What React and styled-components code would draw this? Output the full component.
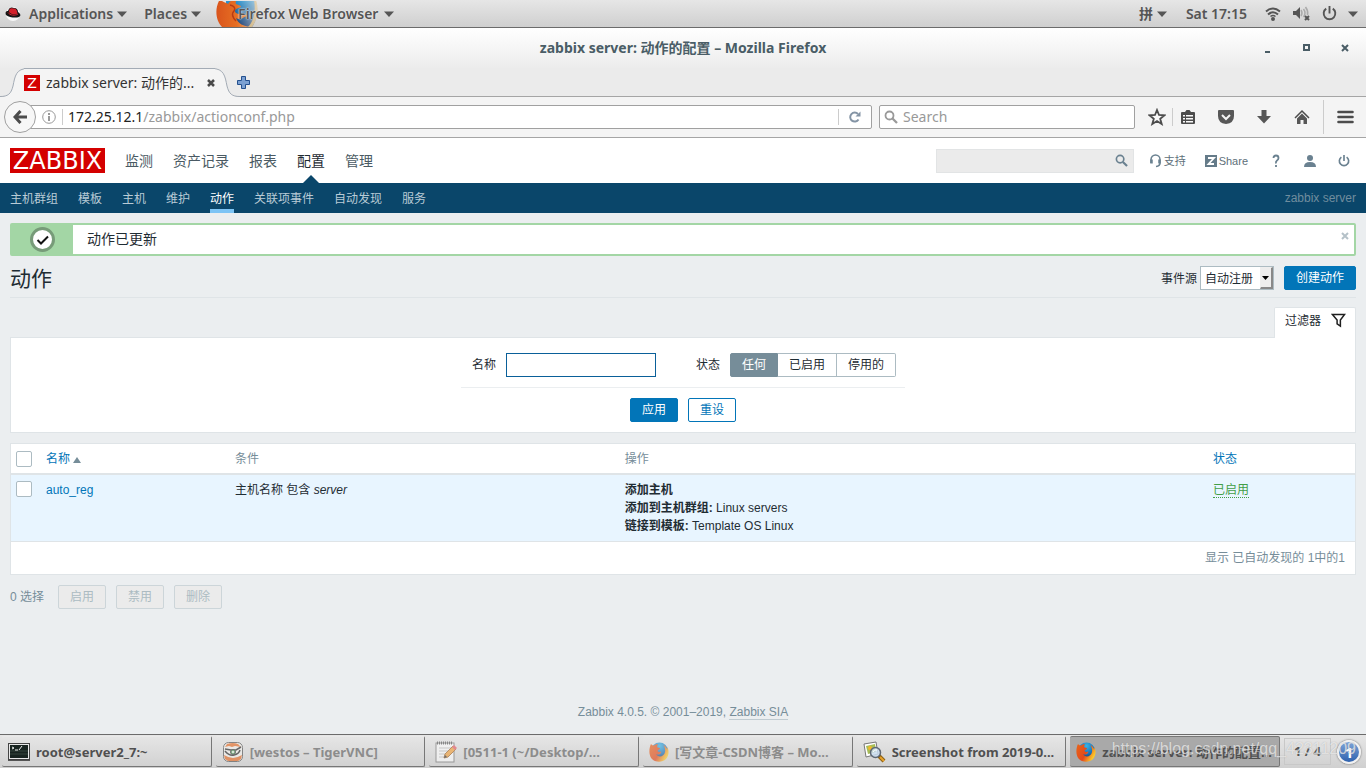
import React, { useState } from 'react'
import styled, { createGlobalStyle, css } from 'styled-components'

const UI_FONT = "'Noto Sans', 'Noto Sans CJK SC', sans-serif"
const PAGE_FONT = "'Liberation Sans', 'Noto Sans CJK SC', sans-serif"

const GlobalStyle = createGlobalStyle`
  * {
    box-sizing: border-box;
  }
  body {
    margin: 0;
    background: #ebeef0;
    color: #1f2c33;
    font-family: ${PAGE_FONT};
    font-size: 12px;
    line-height: 18px;
  }
  button, input, select {
    font: inherit;
    margin: 0;
  }
  button {
    cursor: pointer;
  }
  a {
    text-decoration: none;
  }
`

const Screen = styled.div`
  min-height: 100vh;
  display: flex;
  flex-direction: column;
`

/* ---------- desktop top bar ---------- */

const TopBar = styled.header`
  height: 28px;
  display: flex;
  align-items: center;
  justify-content: space-between;
  padding: 0 8px 0 5px;
  border-bottom: 1px solid #6b6b6b;
  background: linear-gradient(#e6e6e6, #cfcfcf);
  font-family: ${UI_FONT};
  font-size: 14px;
  font-weight: 600;
  color: #555;
`

const TopGroup = styled.div`
  display: flex;
  align-items: center;
  height: 27px;
`

const TopButton = styled.button`
  display: flex;
  align-items: center;
  gap: 4px;
  height: 27px;
  padding: 0;
  margin-left: ${p => p.$space || 0}px;
  border: 0;
  background: none;
  color: inherit;
  white-space: nowrap;
`

const AppLabel = styled.span`
  margin-left: -24px;
  padding-right: 2px;
  text-shadow: 0 0 2px #eee, 0 0 1px #eee;
`

/* ---------- browser chrome ---------- */

const TitleBar = styled.div`
  height: 40px;
  display: grid;
  grid-template-columns: 1fr auto 1fr;
  align-items: center;
  padding: 0 14px;
  background: linear-gradient(#fff, #ececec);
  font-family: ${UI_FONT};
  font-size: 14px;
  font-weight: 700;
  color: #4a5d66;
`

const WindowButtons = styled.div`
  display: flex;
  justify-content: flex-end;
  gap: 25px;
`

const IconButton = styled.button`
  display: flex;
  align-items: center;
  justify-content: center;
  padding: 0;
  border: 0;
  background: none;
  color: #4c4c4c;
  svg {
    flex: none;
  }
`

const TabStrip = styled.div`
  height: 29px;
  display: flex;
  background: #ebebeb;
  box-shadow: inset 0 -1px #a5a5a5;
`

const TabEdge = styled.svg`
  width: 28px;
  height: 29px;
  flex: none;
  transform: ${p => (p.$flip ? 'scaleX(-1)' : 'none')};
`

const Tab = styled.div`
  display: flex;
  align-items: center;
  width: 191px;
  margin: 0 -3px 0 -4px;
  border-top: 1px solid #a3abb5;
  background: #f4f4f4;
  font-family: ${UI_FONT};
  font-size: 14px;
  color: #333;
  z-index: 1;
`

const Favicon = styled.span`
  width: 16px;
  height: 16px;
  margin-right: 6px;
  background: #d40000;
  color: #fff;
  font: 14px/16px 'DejaVu Sans', sans-serif;
  text-align: center;
`

const TabTitle = styled.span`
  flex: 1;
  white-space: nowrap;
`

const NewTab = styled(IconButton)`
  margin-left: -3px;
`

const ToolBar = styled.div`
  height: 41px;
  display: flex;
  align-items: center;
  padding: 0 12px 0 4px;
  border-bottom: 1px solid #a5a5a5;
  background: #f4f4f4;
  font-family: ${UI_FONT};
  font-size: 14px;
`

const BackButton = styled(IconButton)`
  width: 32px;
  height: 32px;
  flex: none;
  border: 1px solid #a0a0a0;
  border-radius: 50%;
  background: #f7f7f7;
  z-index: 1;
`

const Address = styled.div`
  flex: 1;
  height: 24px;
  display: flex;
  align-items: center;
  margin-left: -6px;
  padding: 0 10px 0 11px;
  border: 1px solid #a0a0a0;
  border-radius: 0 2px 2px 0;
  background: #fff;
  color: #999;
  b {
    font-weight: 400;
    color: #222;
  }
`

const Separator = styled.span`
  width: 1px;
  height: ${p => p.$tall || 16}px;
  margin: 0 ${p => p.$right || 5}px 0 ${p => p.$left || 6}px;
  background: #ccc;
`

const Url = styled.span`
  flex: 1;
`

const WebSearch = styled.label`
  width: 256px;
  height: 24px;
  display: flex;
  align-items: center;
  gap: 5px;
  margin: 0 13px 0 7px;
  padding: 0 4px;
  border: 1px solid #a0a0a0;
  border-radius: 2px;
  background: #fff;
  input {
    flex: 1;
    min-width: 0;
    padding: 0;
    border: 0;
    background: none;
    outline: 0;
  }
  input::placeholder {
    color: #999;
  }
`

const ToolIcons = styled.div`
  display: flex;
  gap: 22px;
`

/* ---------- zabbix ---------- */

const Page = styled.div`
  flex: 1;
  display: flex;
  flex-direction: column;
`

const PageHeader = styled.header`
  height: 45px;
  display: flex;
  align-items: center;
  padding: 0 16px 0 10px;
  background: #fff;
`

const Logo = styled.a`
  width: 95px;
  height: 25px;
  margin-right: 20px;
  background: #d40000;
  color: #fff;
  font: 24px/27px 'DejaVu Sans', sans-serif;
  text-align: center;
`

const MainNav = styled.nav`
  flex: 1;
  display: flex;
  gap: 20px;
  font-size: 14px;
`

const MainLink = styled.a`
  position: relative;
  height: 45px;
  line-height: 47px;
  color: ${p => (p.$active ? '#1f2c33' : '#4a5a63')};
  ${p =>
    p.$active &&
    css`
      &::after {
        content: '';
        position: absolute;
        left: 6px;
        bottom: 0;
        border: 8px solid transparent;
        border-top: 0;
        border-bottom-color: #0a466a;
      }
    `}
`

const HeaderSearch = styled.form`
  width: 198px;
  height: 24px;
  display: flex;
  align-items: center;
  margin-right: 15px;
  padding-right: 5px;
  border: 1px solid #e2e4e5;
  background: #ebebeb;
  input {
    flex: 1;
    min-width: 0;
    border: 0;
    background: none;
    outline: 0;
  }
`

const HeaderLinks = styled.div`
  display: flex;
  align-items: center;
  gap: 19px;
  font-size: 11px;
  a {
    display: flex;
    align-items: center;
    gap: 2px;
    color: #5e6f79;
  }
`

const HeaderIcons = styled.div`
  display: flex;
  align-items: center;
  gap: 22px;
  margin-left: 3px;
`

const SubNav = styled.nav`
  height: 30px;
  display: flex;
  gap: 20px;
  padding: 0 10px;
  background: #0a466a;
  line-height: 31px;
`

const SubLink = styled.a`
  height: 30px;
  line-height: 32px;
  color: ${p => (p.$active ? '#fff' : '#b9cbd6')};
  box-shadow: ${p => (p.$active ? 'inset 0 -4px #7dc4f5' : 'none')};
`

const ServerName = styled.span`
  margin-left: auto;
  color: #708d9e;
`

const Content = styled.main`
  flex: 1;
  padding: 10px 10px 0;
`

const Message = styled.output`
  height: 33px;
  display: flex;
  border: 2px solid #a3d6a5;
  border-radius: 2px;
  background: #fff;
  font-size: 14px;
  line-height: 28px;
`

const MessageIcon = styled.span`
  width: 61px;
  display: flex;
  align-items: center;
  justify-content: center;
  padding-right: 1px;
  background: #a3d6a5;
`

const MessageText = styled.span`
  flex: 1;
  padding-left: 14px;
`

const CloseMessage = styled(IconButton)`
  align-self: flex-start;
  padding: 7px 5px;
`

const TitleRow = styled.div`
  height: 32px;
  display: flex;
  align-items: flex-start;
  margin: 10px 0 9px;
  border-bottom: 1px solid #dfe4e7;
  h1 {
    flex: 1;
    margin: 0;
    font-size: 21px;
    line-height: 26px;
    font-weight: 400;
  }
`

const SourceField = styled.div`
  display: flex;
  align-items: center;
  gap: 3px;
  margin-right: 10px;
  line-height: 26px;
`

const SelectBox = styled.span`
  position: relative;
  display: flex;
  align-self: flex-start;
  select {
    width: 74px;
    height: 24px;
    padding: 1px 4px 0;
    appearance: none;
    border: 1px solid #acbbc2;
    border-radius: 0;
    background: #fff;
    color: inherit;
    line-height: 18px;
  }
`

const SelectArrow = styled.span`
  position: absolute;
  top: 1px;
  right: 1px;
  width: 13px;
  height: 22px;
  display: flex;
  align-items: center;
  justify-content: center;
  border: solid;
  border-width: 1px 2px 2px 1px;
  border-color: #eee #888 #888 #eee;
  background: #ededed;
  pointer-events: none;
`

const Button = styled.button`
  height: 24px;
  padding: 1px 11px 0;
  border: 1px solid #0275b8;
  border-radius: 2px;
  background: ${p => (p.$alt ? '#fff' : '#0275b8')};
  color: ${p => (p.$alt ? '#0275b8' : '#fff')};
  line-height: 21px;
  &:disabled {
    border-color: #ccd5d9;
    background: #ebebeb;
    color: #acbbc2;
  }
`

const FilterTab = styled.button`
  height: 31px;
  display: flex;
  align-items: center;
  gap: 10px;
  margin: 0 0 -1px auto;
  padding: 0 9px 5px 10px;
  border: 1px solid #dfe4e7;
  border-bottom: 0;
  border-radius: 2px 2px 0 0;
  background: #fff;
  color: inherit;
  position: relative;
`

const Filter = styled.form`
  display: flex;
  flex-direction: column;
  align-items: center;
  margin-bottom: 10px;
  padding: 15px 0 10px;
  border: 1px solid #dfe4e7;
  background: #fff;
`

const FilterFields = styled.div`
  display: flex;
  align-items: center;
  gap: 10px;
  margin-bottom: 10px;
  padding: 0 9px 10px 11px;
  border-bottom: 1px solid #ebeef0;
  line-height: 20px;
`

const NameInput = styled.input`
  width: 150px;
  height: 24px;
  padding: 0 5px;
  border: 1px solid #0a6099;
  outline: 0;
`

const StatusLabel = styled.span`
  margin-left: 30px;
`

const Segments = styled.div`
  display: flex;
  label {
    position: relative;
  }
  input {
    position: absolute;
    opacity: 0;
  }
  span {
    display: block;
    height: 24px;
    padding: 0 11px;
    border: 1px solid #acbbc2;
    border-left-width: 0;
    line-height: 23px;
  }
  label:first-child span {
    border-left-width: 1px;
    border-radius: 2px 0 0 2px;
  }
  label:last-child span {
    border-radius: 0 2px 2px 0;
  }
  input:checked + span {
    border-color: #768d99;
    background: #768d99;
    color: #fff;
  }
`

const ButtonRow = styled.div`
  display: flex;
  align-items: center;
  gap: 10px;
`

const Table = styled.table`
  width: 100%;
  table-layout: fixed;
  border-collapse: separate;
  border-spacing: 0;
  border: 1px solid #dfe4e7;
  background: #fff;
  th {
    height: 31px;
    padding: 0 5px;
    border-bottom: 2px solid #dfe4e7;
    color: #768d99;
    font-weight: 400;
    text-align: left;
  }
  td {
    padding: 6px 5px;
    vertical-align: top;
  }
  tbody td {
    border-bottom: 1px solid #dfe4e7;
    background: #e8f5ff;
  }
  tfoot td {
    padding: 7px 10px;
    color: #768d99;
    text-align: right;
  }
  a {
    color: #0275b8;
  }
`

const Col = styled.col`
  width: ${p => p.$width};
`

const Check = styled.input`
  && {
    display: block;
    width: 16px;
    height: 16px;
    appearance: none;
    border: 1px solid #acbbc2;
    border-radius: 2px;
    background: #fff;
  }
`

const SortMark = styled.span`
  display: inline-block;
  margin-left: 3px;
  border: 4px solid transparent;
  border-top: 0;
  border-bottom: 6px solid #768d99;
`

const StatusLink = styled.a`
  && {
    color: #429e47;
    border-bottom: 1px dotted #429e47;
  }
`

const Actions = styled.div`
  display: flex;
  align-items: center;
  gap: 10px;
  margin-top: 10px;
  color: #768d99;
  span {
    margin-right: 4px;
  }
`

const Footer = styled.footer`
  padding-bottom: 13px;
  color: #768d99;
  text-align: center;
  a {
    border-bottom: 1px solid #c0cbd1;
    color: inherit;
  }
`

/* ---------- task bar ---------- */

const TaskBar = styled.footer`
  position: relative;
  height: 34px;
  display: flex;
  align-items: center;
  gap: 4px;
  padding: 0 5px 0 2px;
  border-top: 1px solid #6b6b6b;
  background: linear-gradient(#e6e6e6, #d0d0d0);
  font-family: ${UI_FONT};
  font-size: 13px;
  font-weight: 700;
  color: #555;
`

const Task = styled.button`
  flex: 1;
  min-width: 0;
  height: 31px;
  display: flex;
  align-items: center;
  gap: 6px;
  padding: 1px 6px 0;
  border: solid;
  border-width: 1px 1px 1px 0;
  border-color: ${p => (p.$active ? '#777' : '#e9e9e9 #777 #777')};
  border-radius: 2px;
  background: ${p => (p.$active ? '#a9a9a9' : 'linear-gradient(#e5e5e5, #d2d2d2)')};
  color: ${p => (p.$dim ? '#8c8c8c' : '#505050')};
  text-align: left;
  svg {
    flex: none;
    opacity: ${p => (p.$dim ? 0.65 : 1)};
  }
  span {
    overflow: hidden;
    white-space: nowrap;
  }
`

const Pager = styled.span`
  width: 47px;
  height: 27px;
  border: 1px solid #c8c8c8;
  line-height: 25px;
  text-align: center;
`

const Notice = styled.span`
  width: 24px;
  height: 24px;
  margin-left: 2px;
  border: 2px solid #f2f2f2;
  border-radius: 50%;
  background: linear-gradient(#7ea5da, #2f62ae);
  box-shadow: 0 0 2px #555;
  color: #fff;
  font-size: 15px;
  line-height: 20px;
  text-align: center;
`

const BlogMark = styled.span`
  position: absolute;
  top: 4px;
  right: 10px;
  color: rgba(255, 255, 255, 0.65);
  font: 16px/20px ${PAGE_FONT};
  text-shadow: 0 0 1px rgba(120, 120, 120, 0.5);
  pointer-events: none;
`

/* ---------- drawings ---------- */

const Caret = () => (
  <svg width='10' height='6'>
    <path d='M0 0.500h10L5 6z' fill='#555' />
  </svg>
)

const RedHat = () => (
  <svg width='16' height='16' viewBox='0 0 16 16'>
    <circle cx='8' cy='8' r='7' fill='#f7f7f7' />
    <path d='M1 9C0 6 1 5 3 5C4 1 7 1 9 2C12 2 13 4 13 6C16 8 16 10 14 11C11 12 5 12 1 9z' fill='#161616' />
    <path d='M4 6C4 2 6 2 8 2.500C11 2 12 4 12.500 7.500C10 9 6 8.500 4 6z' fill='#d3202a' />
    <path d='M3 6.500C5 9.500 10 10 13 8' fill='none' stroke='#d3202a' strokeWidth='1' />
  </svg>
)

const FirefoxIcon = ({ size = 20, id = 'fx' }) => (
  <svg width={size} height={size} viewBox='0 0 20 20'>
    <defs>
      <radialGradient id={`${id}-globe`} cx='0.5' cy='0.2' r='0.8'>
        <stop offset='0' stopColor='#36b5e8' />
        <stop offset='0.6' stopColor='#1b6fb5' />
        <stop offset='1' stopColor='#132f62' />
      </radialGradient>
      <linearGradient id={`${id}-fox`} x1='0' y1='0' x2='1' y2='0.5'>
        <stop offset='0' stopColor='#e8651a' />
        <stop offset='0.6' stopColor='#e4491b' />
        <stop offset='1' stopColor='#fbc92b' />
      </linearGradient>
    </defs>
    <circle cx='10.500' cy='9' r='8.500' fill={`url(#${id}-globe)`} />
    <path
      d='M2 2C3 3.500 4 3.500 5 3.500C7 2 8 2 9 2.500C8 3.500 8 4.500 8.500 5.500L11 6C11 7.500 9 7.500 8.500 9C9.500 10.500 11 10 12.500 9.500C11.500 13 8.500 13 7 12C9 16 15 15 16 10C16.500 7 15.500 5 14.500 3C18 5 18 7 18 8L18.500 5C20.500 10 19.500 14 17 17C13 21 6 20.500 2.500 16.500C-0.500 12.500 0 6 2 2z'
      fill={`url(#${id}-fox)`}
    />
  </svg>
)

/* the panel shows only the middle of a large icon, faded on its right side */
const PanelFirefox = () => (
  <svg width='42' height='26' viewBox='0 0 42 26'>
    <defs>
      <linearGradient id='panel-fade'>
        <stop offset='0.5' stopColor='#fff' />
        <stop offset='1' stopColor='#fff' stopOpacity='0.3' />
      </linearGradient>
      <mask id='panel-mask'>
        <rect width='42' height='26' fill='url(#panel-fade)' />
      </mask>
      <linearGradient id='panel-globe' x1='0' y1='0' x2='0' y2='1'>
        <stop offset='0' stopColor='#2f9bd6' />
        <stop offset='1' stopColor='#17386f' />
      </linearGradient>
      <linearGradient id='panel-fox'>
        <stop offset='0' stopColor='#d9541c' />
        <stop offset='1' stopColor='#f08128' />
      </linearGradient>
    </defs>
    <g mask='url(#panel-mask)'>
      <path d='M10 -2H39C43 8 41 19 36 26H10z' fill='url(#panel-globe)' />
      <path
        d='M4 -2C-2 8 0 20 6 26H34C28 25 22 23 20 17C25 20 27 16 31 15C29 12 25 12 22 13C19 12 18 10 20 8L25 6C25 4 21 4 20 3C19 1 20 0 22 -2C17 -2 14 0 12 3C9 1 6 1 4 -2z'
        fill='url(#panel-fox)'
      />
      <path d='M14 4C18 5 20 7 18 10C15 13 17 17 20 20' fill='none' stroke='#b83c14' strokeWidth='1.500' />
      <path d='M38 -1C40 10 38 20 32 26H36C42 18 43 8 40 -1z' fill='#dcae58' />
    </g>
  </svg>
)

const Wifi = () => (
  <svg width='16' height='14' viewBox='0 0 16 14' fill='none' stroke='#555' strokeWidth='2'>
    <path d='M1 4.500Q8 -1.500 15 4.500' />
    <path d='M3 7.500Q8 3 13 7.500' />
    <path d='M5.500 9.500Q8 7.500 10.500 9.500' strokeWidth='1.500' />
    <circle cx='8' cy='12' r='1' fill='#555' />
  </svg>
)

const Muted = () => (
  <svg width='17' height='15' viewBox='0 0 17 15' fill='none'>
    <path d='M0 5h3l4-4v12L3 9H0z' fill='#555' />
    <path d='M8 4q2 3 0 6M10.500 3q3 4 0 8M12.500 1q3 4 2 8' stroke='#aaa' strokeWidth='1.500' />
    <path d='M12 10l4 4m0-4l-4 4' stroke='#555' strokeWidth='2' />
  </svg>
)

const Power = ({ size = 16, color = '#555', width = 2 }) => (
  <svg width={size} height={size} viewBox='0 0 16 16' fill='none' stroke={color} strokeWidth={width}>
    <path d='M4.500 2.800A6.200 6.200 0 1 0 11.500 2.800M8 0v8' />
  </svg>
)

const Magnifier = ({ size = 14, color = '#999' }) => (
  <svg width={size} height={size} viewBox='0 0 14 14' fill='none' stroke={color}>
    <circle cx='5.500' cy='5.500' r='4' strokeWidth='1.800' />
    <path d='M8.500 8.500l4.500 4.500' strokeWidth='2.300' />
  </svg>
)

const Cross = ({ size = 8, color = '#4a4a4a', width = 2.5 }) => (
  <svg width={size} height={size} viewBox='0 0 8 8' stroke={color} strokeWidth={width}>
    <path d='M1 1l6 6M7 1L1 7' />
  </svg>
)

const Edge = ({ flip }) => (
  <TabEdge $flip={flip} viewBox='0 0 28 29'>
    <path d='M0 28.500C8 28.500 11 26 13 18C15 8 16 0.500 28 0.500V29H0z' fill='#f4f4f4' />
    <path d='M0 28.500C8 28.500 11 26 13 18C15 8 16 0.500 28 0.500' fill='none' stroke='#a3abb5' />
  </TabEdge>
)

const TerminalIcon = () => (
  <svg width='22' height='20' viewBox='0 0 22 20'>
    <rect x='0.500' y='1.500' width='21' height='16' fill='#e8e8e8' stroke='#444' />
    <rect x='2' y='3' width='18' height='13' fill='#182420' />
    <path d='M2 9h18M2 12h18' stroke='#35453d' />
    <path d='M4 5l2 1-2 1M7 8h3M11 8l3-4' stroke='#eee' fill='none' />
    <path d='M0 18.500h22' stroke='#555' />
  </svg>
)

const TigerIcon = () => (
  <svg width='22' height='20' viewBox='-1 0 22 20'>
    <rect x='0.500' y='0.500' width='19' height='19' rx='5' fill='#f2f0ec' stroke='#555' />
    <path d='M4 2q6-2 11 0l3 3-6-1-3 1-3-1-4 1z' fill='#e56d28' />
    <path d='M1 13q5 3 9 3t9-3l-1 4-3 2H5l-3-2z' fill='#e56d28' />
    <path d='M2 7l6 1h5l5-3M2 9q4 5 9 4t6-5' fill='none' stroke='#282828' strokeWidth='1.500' />
    <circle cx='10' cy='10' r='2.500' fill='#58a765' stroke='#333' />
    <circle cx='10' cy='10' r='1' fill='#fff' />
  </svg>
)

const NotesIcon = () => (
  <svg width='22' height='22' viewBox='0 0 22 22'>
    <rect x='1' y='2' width='18' height='19' fill='#fafafa' stroke='#777' />
    <path d='M2 2h16' stroke='#555' strokeWidth='3' strokeDasharray='1 1' />
    <path d='M4 7h12M4 10h9M4 13h7M4 16h6' stroke='#bbb' />
    <path d='M9 17l1-4 8-8 3 3-8 8z' fill='#f1a13e' stroke='#a5682b' />
    <path d='M17 6l2-2 3 3-2 2z' fill='#e55c66' />
    <path d='M9 17l1-3 2 2z' fill='#333' />
  </svg>
)

const ViewerIcon = () => (
  <svg width='23' height='22' viewBox='0 0 23 22'>
    <path d='M1 3l12-2 2 12-12 3z' fill='#fff' stroke='#777' />
    <path d='M3 5l9-2 1 8-8 2z' fill='#a8bd57' />
    <circle cx='7' cy='7' r='2' fill='#f2b72b' />
    <path d='M16 15l5 5' stroke='#8a6114' strokeWidth='4' />
    <path d='M17 16l4 4' stroke='#e8a22b' strokeWidth='2' />
    <circle cx='12.500' cy='11.500' r='5' fill='#c9dcef' fillOpacity='0.85' stroke='#5d6774' strokeWidth='1.500' />
    <path d='M10 11q1-3 4-2' stroke='#fff' fill='none' />
  </svg>
)

const BrowserToolIcons = () => (
  <>
    <IconButton aria-label='Bookmarks'>
      <svg width='16' height='16' viewBox='0 0 16 16'>
        <path d='M2 3h3l1.500-2h3L11 3h3q1 0 1 1v10q0 1-1 1H2q-1 0-1-1V4q0-1 1-1z' fill='#4c4c4c' />
        <path d='M3 6h2v1.500H3zM6 6h7v1.500H6zM3 9h2v1.500H3zM6 9h7v1.500H6zM3 12h2v1.500H3zM6 12h7v1.500H6z' fill='#fafafa' />
      </svg>
    </IconButton>
    <IconButton aria-label='Pocket'>
      <svg width='16' height='16' viewBox='0 0 16 16'>
        <path d='M0 2q0-1 1-1h14q1 0 1 1v5q0 7-8 8Q0 14 0 7z' fill='#575757' />
        <path d='M4 6l4 4 4-4' fill='none' stroke='#f4f4f4' strokeWidth='2' />
      </svg>
    </IconButton>
    <IconButton aria-label='Downloads'>
      <svg width='16' height='16' viewBox='0 0 16 16'>
        <path d='M5.500 1h5v6H15l-7 7.500L1 7h4.500z' fill='#575757' />
      </svg>
    </IconButton>
    <IconButton aria-label='Home'>
      <svg width='16' height='16' viewBox='0 0 16 16'>
        <path d='M1 9l7-7 7 7' fill='none' stroke='#4c4c4c' strokeWidth='1.500' />
        <path d='M3 9.500l5-5 5 5V15h-3.500v-4h-3v4H3z' fill='#575757' />
      </svg>
    </IconButton>
  </>
)

const MAIN_MENU = ['监测', '资产记录', '报表', '配置', '管理']
const SUB_MENU = ['主机群组', '模板', '主机', '维护', '动作', '关联项事件', '自动发现', '服务']
const STATUSES = ['任何', '已启用', '停用的']

const TASKS = [
  { title: 'root@server2_7:~', icon: <TerminalIcon /> },
  { title: '[westos – TigerVNC]', icon: <TigerIcon />, dim: true },
  { title: '[0511-1 (~/Desktop/...', icon: <NotesIcon />, dim: true },
  { title: '[写文章-CSDN博客 – Mo...', icon: <FirefoxIcon id='task-a' />, dim: true },
  { title: 'Screenshot from 2019-0...', icon: <ViewerIcon /> },
  { title: 'zabbix server: 动作的配置...', icon: <FirefoxIcon id='task-b' />, active: true },
]

const DesktopBar = () => (
  <TopBar>
    <TopGroup>
      <RedHat />
      <TopButton $space={8}>
        Applications <Caret />
      </TopButton>
      <TopButton $space={17}>
        Places <Caret />
      </TopButton>
      <TopButton $space={15}>
        <PanelFirefox />
        <AppLabel>Firefox Web Browser</AppLabel>
        <Caret />
      </TopButton>
    </TopGroup>
    <TopGroup>
      <TopButton>
        拼 <Caret />
      </TopButton>
      <TopButton $space={19}>Sat 17:15</TopButton>
      <TopButton $space={18} aria-label='Network'>
        <Wifi />
      </TopButton>
      <TopButton $space={12} aria-label='Volume'>
        <Muted />
      </TopButton>
      <TopButton $space={12} aria-label='Power'>
        <Power size={15} />
      </TopButton>
      <TopButton $space={11} aria-label='System menu'>
        <Caret />
      </TopButton>
    </TopGroup>
  </TopBar>
)

const BrowserChrome = () => (
  <>
    <TitleBar>
      <span />
      <span>zabbix server: 动作的配置 – Mozilla Firefox</span>
      <WindowButtons>
        <IconButton aria-label='Minimize'>
          <svg width='14' height='9'>
            <path d='M5 7h5v2H5z' fill='#4a5d66' />
          </svg>
        </IconButton>
        <IconButton aria-label='Maximize'>
          <svg width='14' height='8'>
            <path d='M5 1h5v5H5z' fill='none' stroke='#4a5d66' strokeWidth='2' />
          </svg>
        </IconButton>
        <IconButton aria-label='Close'>
          <svg width='14' height='8'>
            <path d='M4 1l6 6M10 1L4 7' stroke='#4a5d66' strokeWidth='2' />
          </svg>
        </IconButton>
      </WindowButtons>
    </TitleBar>
    <TabStrip>
      <Edge />
      <Tab>
        <Favicon>Z</Favicon>
        <TabTitle>zabbix server: 动作的...</TabTitle>
        <IconButton aria-label='Close tab'>
          <Cross />
        </IconButton>
      </Tab>
      <Edge flip />
      <NewTab aria-label='New tab'>
        <svg width='13' height='13' viewBox='0 0 13 13'>
          <path d='M4.500 0.500h4v4h4v4h-4v4h-4v-4h-4v-4h4z' fill='#7ba0d2' stroke='#24508e' />
        </svg>
      </NewTab>
    </TabStrip>
    <ToolBar>
      <BackButton aria-label='Back'>
        <svg width='14' height='14' viewBox='0 0 14 14' fill='none' stroke='#4c4c4c' strokeWidth='3'>
          <path d='M7.500 1L2 7l5.500 6M2 7h12' />
        </svg>
      </BackButton>
      <Address>
        <svg width='14' height='14' viewBox='0 0 14 14' fill='none' stroke='#999'>
          <circle cx='7' cy='7' r='6.300' />
          <path d='M7 3v2M7 6v5' strokeWidth='2' />
        </svg>
        <Separator />
        <Url>
          <b>172.25.12.1</b>/zabbix/actionconf.php
        </Url>
        <Separator $right={10} />
        <IconButton aria-label='Reload'>
          <svg width='12' height='12' viewBox='0 0 12 12'>
            <path d='M9.500 8.500A4.500 4.500 0 1 1 9 3' fill='none' stroke='#8494a5' strokeWidth='2' />
            <path d='M11.500 0.500v5h-5z' fill='#8494a5' />
          </svg>
        </IconButton>
      </Address>
      <WebSearch>
        <Magnifier />
        <input placeholder='Search' aria-label='Search the web' />
      </WebSearch>
      <IconButton aria-label='Bookmark this page'>
        <svg width='18' height='18' viewBox='0 0 18 18'>
          <path
            d='M9 2l2 5 5.500 0.300-4.300 3.500 1.500 5.200L9 13l-4.700 3 1.500-5.200L1.500 7.300 7 7z'
            fill='#fafafa'
            stroke='#4c4c4c'
            strokeWidth='1.800'
          />
        </svg>
      </IconButton>
      <Separator $tall={18} $right={7} />
      <ToolIcons>
        <BrowserToolIcons />
      </ToolIcons>
      <Separator $tall={34} $left={13} $right={13} />
      <IconButton aria-label='Menu'>
        <svg width='17' height='14' viewBox='0 0 17 14'>
          <path d='M1.500 2h14M1.500 7h14M1.500 12h14' stroke='#4c4c4c' strokeWidth='2.600' strokeLinecap='round' />
        </svg>
      </IconButton>
    </ToolBar>
  </>
)

const ZabbixHeader = () => (
  <>
    <PageHeader>
      <Logo href='#'>ZABBIX</Logo>
      <MainNav>
        {MAIN_MENU.map(item => (
          <MainLink key={item} href='#' $active={item === '配置'}>
            {item}
          </MainLink>
        ))}
      </MainNav>
      <HeaderSearch>
        <input aria-label='搜索' />
        <IconButton type='button' aria-label='搜索'>
          <Magnifier size={13} color='#6a8190' />
        </IconButton>
      </HeaderSearch>
      <HeaderLinks>
        <a href='#'>
          <svg width='13' height='14' viewBox='0 0 13 14' fill='none' stroke='#6a8190'>
            <path d='M2 9V5.500a4 4 0 0 1 9 0V9q0 3-4 3.500' strokeWidth='1.500' />
            <path d='M2.500 5.500v4M10.500 5.500v4' strokeWidth='2.500' />
          </svg>
          支持
        </a>
        <a href='#'>
          <svg width='12' height='12' viewBox='0 0 12 12'>
            <rect width='12' height='12' fill='#657b89' />
            <path d='M3 3h6L3.500 9H9' fill='none' stroke='#fff' strokeWidth='1.800' />
          </svg>
          Share
        </a>
        <HeaderIcons>
          <a href='#' aria-label='帮助'>
            <svg width='12' height='14' viewBox='0 0 12 14' fill='none' stroke='#6a8190' strokeWidth='1.800'>
              <path d='M3.500 4q0-2.500 2.500-2.500T8.500 4Q8.500 5.500 7 6.500T6 9.500M6 11v2' />
            </svg>
          </a>
          <a href='#' aria-label='用户'>
            <svg width='12' height='12' viewBox='0 0 12 12' fill='#6a8190'>
              <circle cx='6' cy='3' r='3' />
              <path d='M0 12q0-5 6-5t6 5z' />
            </svg>
          </a>
          <a href='#' aria-label='退出'>
            <Power size={12} color='#6a8190' width={2.2} />
          </a>
        </HeaderIcons>
      </HeaderLinks>
    </PageHeader>
    <SubNav>
      {SUB_MENU.map(item => (
        <SubLink key={item} href='#' $active={item === '动作'}>
          {item}
        </SubLink>
      ))}
      <ServerName>zabbix server</ServerName>
    </SubNav>
  </>
)

const ActionFilter = () => {
  const [status, setStatus] = useState('任何')

  return (
    <>
      <FilterTab>
        过滤器
        <svg width='15' height='15' viewBox='0 0 16 15' fill='none' stroke='#1f1f1f' strokeWidth='1.600'>
          <path d='M1.500 1h13L10 7v6.500L6.500 11V7z' />
        </svg>
      </FilterTab>
      <Filter onSubmit={e => e.preventDefault()}>
        <FilterFields>
          <label htmlFor='filter-name'>名称</label>
          <NameInput id='filter-name' />
          <StatusLabel id='filter-status'>状态</StatusLabel>
          <Segments role='radiogroup' aria-labelledby='filter-status'>
            {STATUSES.map(item => (
              <label key={item}>
                <input
                  type='radio'
                  name='status'
                  checked={status === item}
                  onChange={() => setStatus(item)}
                />
                <span>{item}</span>
              </label>
            ))}
          </Segments>
        </FilterFields>
        <ButtonRow>
          <Button>应用</Button>
          <Button type='button' $alt>
            重设
          </Button>
        </ButtonRow>
      </Filter>
    </>
  )
}

const ActionTable = () => (
  <Table>
    <colgroup>
      <Col $width='30px' />
      <Col $width='189px' />
      <Col $width='29%' />
      <Col />
      <Col $width='147px' />
    </colgroup>
    <thead>
      <tr>
        <th>
          <Check type='checkbox' aria-label='全选' />
        </th>
        <th>
          <a href='#'>
            名称
            <SortMark />
          </a>
        </th>
        <th>条件</th>
        <th>操作</th>
        <th>
          <a href='#'>状态</a>
        </th>
      </tr>
    </thead>
    <tbody>
      <tr>
        <td>
          <Check type='checkbox' aria-label='auto_reg' />
        </td>
        <td>
          <a href='#'>auto_reg</a>
        </td>
        <td>
          主机名称 包含 <em>server</em>
        </td>
        <td>
          <b>添加主机</b>
          <br />
          <b>添加到主机群组:</b> Linux servers
          <br />
          <b>链接到模板:</b> Template OS Linux
        </td>
        <td>
          <StatusLink href='#'>已启用</StatusLink>
        </td>
      </tr>
    </tbody>
    <tfoot>
      <tr>
        <td colSpan={5}>显示 已自动发现的 1中的1</td>
      </tr>
    </tfoot>
  </Table>
)

export default function App() {
  const [messageOpen, setMessageOpen] = useState(true)

  return (
    <Screen>
      <GlobalStyle />
      <DesktopBar />
      <BrowserChrome />
      <Page>
        <ZabbixHeader />
        <Content>
          {messageOpen && (
            <Message>
              <MessageIcon>
                <svg width='25' height='25' viewBox='0 0 25 25' fill='none'>
                  <circle cx='12.500' cy='12.500' r='11' fill='#fff' stroke='#779b79' strokeWidth='3' />
                  <path d='M7.500 13l3.500 3.500 7-7' stroke='#111' strokeWidth='2' />
                </svg>
              </MessageIcon>
              <MessageText>动作已更新</MessageText>
              <CloseMessage aria-label='关闭' onClick={() => setMessageOpen(false)}>
                <Cross color='#b5c1c8' width={2} />
              </CloseMessage>
            </Message>
          )}
          <TitleRow>
            <h1>动作</h1>
            <SourceField>
              <label htmlFor='source'>事件源</label>
              <SelectBox>
                <select id='source'>
                  <option>自动注册</option>
                </select>
                <SelectArrow>
                  <svg width='7' height='4'>
                    <path d='M0 0h7L3.500 4z' />
                  </svg>
                </SelectArrow>
              </SelectBox>
            </SourceField>
            <Button>创建动作</Button>
          </TitleRow>
          <ActionFilter />
          <ActionTable />
          <Actions>
            <span>0 选择</span>
            <Button disabled>启用</Button>
            <Button disabled>禁用</Button>
            <Button disabled>删除</Button>
          </Actions>
        </Content>
        <Footer>
          Zabbix 4.0.5. © 2001–2019, <a href='#'>Zabbix SIA</a>
        </Footer>
      </Page>
      <TaskBar>
        {TASKS.map(task => (
          <Task key={task.title} $dim={task.dim} $active={task.active}>
            {task.icon}
            <span>{task.title}</span>
          </Task>
        ))}
        <Pager>1 / 4</Pager>
        <Notice>1</Notice>
        <BlogMark>https://blog.csdn.net/qq_42311209</BlogMark>
      </TaskBar>
    </Screen>
  )
}
